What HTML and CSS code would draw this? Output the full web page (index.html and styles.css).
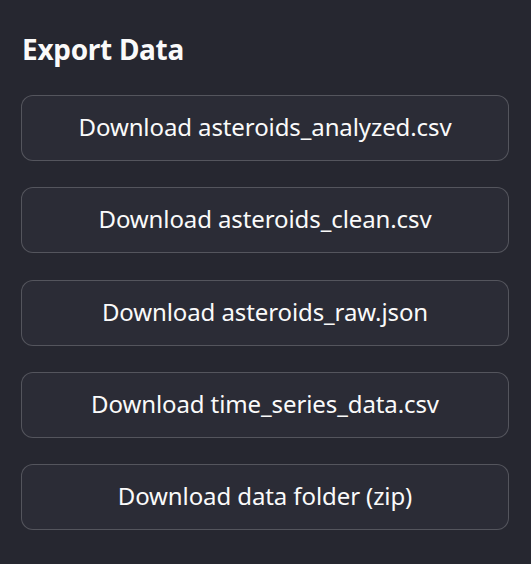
FILE: index.html
```html
<!DOCTYPE html>
<html>
<head>
	<meta charset="UTF-8">
	<title>Export Data</title>
<link rel="stylesheet" href="styles.css">
</head>
<body>
<div class="panel">
	<h2 class="title">Export Data</h2>
	<div class="downloads">
		<button class="dl-btn">Download asteroids_analyzed.csv</button>
		<button class="dl-btn">Download asteroids_clean.csv</button>
		<button class="dl-btn">Download asteroids_raw.json</button>
		<button class="dl-btn">Download time_series_data.csv</button>
		<button class="dl-btn">Download data folder (zip)</button>
	</div>
</div>
</body>
</html>
```
FILE: styles.css
```css
html,body{margin:0;background:#262730;}
body{font-family:"Noto Sans","Open Sans",sans-serif;color:#fafafa;}
.panel{padding:30px 22px 0 21px;}
.title{margin:0 0 0 1px;font-size:28px;font-weight:700;line-height:38px;letter-spacing:-0.3px;}
.downloads{display:flex;flex-direction:column;gap:26.25px;margin-top:27px;}
.dl-btn{display:block;width:100%;height:66px;padding:0 16px 3px;background:#2b2c36;border:1px solid rgba(250,250,250,0.2);border-radius:12px;color:#fafafa;font-family:inherit;font-size:24px;letter-spacing:-0.1px;text-align:center;}
```
